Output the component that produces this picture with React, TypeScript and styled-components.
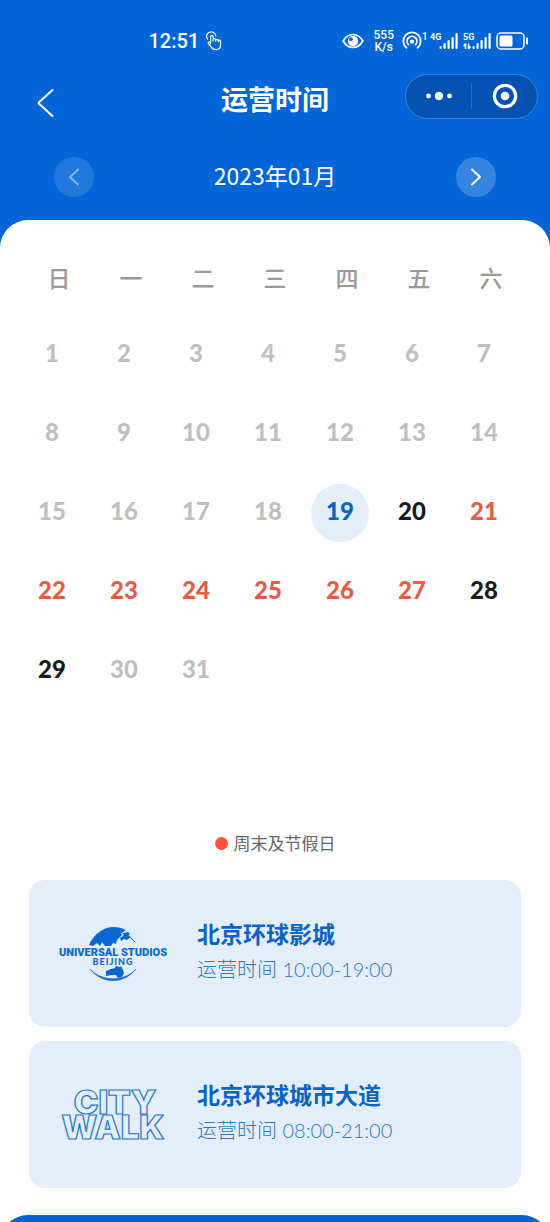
import React from "react";
import styled, { createGlobalStyle } from "styled-components";

const blue = "#0266d9";
const deepBlue = "#0963c2";
const paleBlue = "#e4eefb";
const red = "#e95a45";

const GlobalStyle = createGlobalStyle`
  * { box-sizing: border-box; }
  body {
    margin: 0;
    background: #fff;
    font-family: "Noto Sans CJK SC", "Noto Sans", sans-serif;
  }
  button { padding: 0; border: 0; background: none; font: inherit; color: inherit; cursor: pointer; }
  svg { flex: none; }
`;

const Page = styled.main`
  background: ${blue};
  color: #fff;
`;

const StatusBar = styled.div`
  display: flex;
  align-items: center;
  justify-content: space-between;
  height: 62px;
  padding: 20px 21px 0 27%;
`;

const StatusGroup = styled.div<{ $gap: number }>`
  display: flex;
  align-items: center;
  gap: ${(p) => p.$gap}px;
`;

const Clock = styled.time`
  font-family: Roboto, sans-serif;
  font-size: 20px;
  line-height: 24px;
  font-weight: 500;
`;

const Speed = styled.div`
  font-family: Roboto, sans-serif;
  font-size: 12px;
  line-height: 12px;
  font-weight: 500;
  text-align: center;
`;

const NavBar = styled.header`
  display: grid;
  grid-template-columns: 1fr auto 1fr;
  align-items: center;
  height: 68px;
  padding: 0 12px 0 36px;
`;

const BackButton = styled.button`
  justify-self: start;
  display: flex;
  padding-top: 14px;
`;

const Title = styled.h1`
  margin: 0;
  padding: 6px 24px 0 0;
  font-size: 27px;
  line-height: 32px;
  font-weight: 700;
`;

const Capsule = styled.div`
  justify-self: end;
  display: flex;
  align-items: center;
  width: 133px;
  height: 45px;
  border: 1px solid #3b82d6;
  border-radius: 23px;
  background: #0351b0;
`;

const CapsuleButton = styled.button`
  flex: 1;
  display: flex;
  align-items: center;
  justify-content: center;
  height: 26px;
  & + & { border-left: 1px solid #2a6fc4; }
`;

const MonthBar = styled.div`
  display: flex;
  align-items: center;
  justify-content: space-between;
  height: 90px;
  padding: 3px 54px 0;
`;

const MonthLabel = styled.h2`
  margin: 0;
  padding-bottom: 4px;
  font-size: 23px;
  line-height: 28px;
  font-weight: 400;
`;

const RoundButton = styled.button`
  display: flex;
  align-items: center;
  justify-content: center;
  width: 40px;
  height: 40px;
  border-radius: 50%;
  background: rgba(255, 255, 255, 0.2);
  &:disabled { background: rgba(255, 255, 255, 0.12); color: rgba(255, 255, 255, 0.45); }
`;

const Panel = styled.section`
  padding: 22px 29px 27px;
  border-radius: 28px 28px 0 0;
  background: #fff;
`;

const Calendar = styled.table`
  width: calc(100% + 12px);
  margin: 0 0 80px -13px;
  border-collapse: collapse;
  table-layout: fixed;
`;

const Weekday = styled.th`
  height: 73px;
  padding: 0 0 4px 14px;
  color: #999;
  font-size: 23px;
  line-height: 28px;
  font-weight: 500;
`;

const DayCell = styled.td`
  height: 79px;
  padding: 0;
`;

type DayKind = "closed" | "open" | "holiday" | "selected";

const dayColors: Record<DayKind, string> = {
  closed: "#bfbfbf",
  open: "#1a1a1a",
  holiday: red,
  selected: deepBlue,
};

const DayButton = styled.button<{ $kind: DayKind }>`
  display: block;
  width: 58px;
  height: 58px;
  margin: 0 auto;
  padding-bottom: 4px;
  border-radius: 50%;
  background: ${(p) => (p.$kind === "selected" ? paleBlue : "transparent")};
  color: ${(p) => dayColors[p.$kind]};
  font-family: Lato, sans-serif;
  font-size: 24px;
  font-weight: 900;
`;

const Legend = styled.p`
  display: flex;
  align-items: center;
  justify-content: center;
  gap: 6px;
  height: 90px;
  margin: 0;
  padding-top: 16px;
  color: #666;
  font-size: 17px;
  line-height: 20px;
`;

const Dot = styled.span`
  width: 13px;
  height: 13px;
  border-radius: 50%;
  background: #f8553d;
`;

const VenueList = styled.div`
  display: flex;
  flex-direction: column;
  gap: 14px;
`;

const VenueCard = styled.article`
  display: grid;
  grid-template-columns: 168px 1fr;
  height: 147px;
  border-radius: 16px;
  background: ${paleBlue};
  color: ${deepBlue};
`;

const VenueLogo = styled.div`
  display: flex;
  align-items: center;
  justify-content: center;
`;

const VenueInfo = styled.div`
  padding-top: 36px;
`;

const VenueName = styled.h3`
  margin: 0;
  font-size: 23px;
  line-height: 34px;
  font-weight: 700;
`;

const VenueHours = styled.p`
  margin: 0;
  color: #2d79b9;
  font-family: Lato, "Noto Sans CJK SC", sans-serif;
  font-size: 20px;
  line-height: 38px;
  font-weight: 300;
`;

const Footer = styled.footer`
  height: 8px;
  overflow: hidden;
  background: #fff;
`;

const FooterSheet = styled.div`
  height: 56px;
  border-radius: 28px;
  background: ${blue};
`;

const TouchIcon = () => (
  <svg width="18" height="20" viewBox="0 0 18 20" fill="none" stroke="#fff" strokeWidth="1.2" strokeLinecap="round" strokeLinejoin="round">
    <path d="M2.5 8.2A4.6 4.6 0 1 1 10.8 5" />
    <path d="M5.6 13V5.6a1.3 1.3 0 0 1 2.6 0V10V8.8a1.2 1.2 0 0 1 2.5 0v1.4v-.7a1.2 1.2 0 0 1 2.5 0v1.3v-.5a1.1 1.1 0 0 1 2.3 0V14c0 2.6-1.6 4.6-4.4 4.6-2.4 0-3.7-.8-4.7-2.3L3.3 12.6c-.7-1.3.8-2.2 1.7-1.2z" />
  </svg>
);

const EyeIcon = () => (
  <svg width="22" height="16" viewBox="0 0 22 16">
    <path d="M1.2 8C3.5 3.800 7 1.500 11 1.500S18.500 3.800 20.800 8C18.500 12.200 15 14.500 11 14.500S3.500 12.200 1.200 8Z" fill="none" stroke="#fff" strokeWidth="1.7" />
    <circle cx="11" cy="8" r="5.2" fill="#fff" />
    <circle cx="9" cy="6.2" r="1.9" fill={blue} />
  </svg>
);

const HotspotIcon = () => (
  <svg width="26" height="20" viewBox="0 0 26 20" fill="none" stroke="#fff" strokeWidth="1.8" strokeLinecap="round">
    <path d="M4.5 16.8A8.7 8.7 0 1 1 15.5 16.800" />
    <path d="M6.4 13.6A4.900 4.900 0 1 1 13.600 13.600" />
    <circle cx="10" cy="10.6" r="2.2" fill="#fff" stroke="none" />
    <text x="20" y="9" fill="#fff" stroke="none" fontSize="10" fontFamily="Roboto, sans-serif" fontWeight="500">1</text>
  </svg>
);

const SignalIcon = ({ label, data }: { label: string; data?: boolean }) => (
  <svg width="28" height="20" viewBox="0 0 28 20" fill="#fff">
    <text x="0" y="9" fontSize="9" fontFamily="Roboto, sans-serif" fontWeight="700">{label}</text>
    <rect x="9.5" y="15" width="2.2" height="3" rx="1" />
    <rect x="13.5" y="12" width="2.2" height="6" rx="1" />
    <rect x="17.5" y="9" width="2.2" height="9" rx="1" />
    <rect x="21.5" y="6" width="2.2" height="12" rx="1" />
    <rect x="25.5" y="2" width="2.2" height="16" rx="1" />
    {data && <path d="M2.5 12.5V18M2.5 12.500L.5 15M5.500 12.500V18M5.500 18L7.500 15.500" fill="none" stroke="#fff" strokeWidth="1.5" />}
  </svg>
);

const BatteryIcon = () => (
  <svg width="33" height="18" viewBox="0 0 33 18">
    <rect x="1" y="1" width="27" height="16" rx="4" fill="none" stroke="#fff" strokeWidth="1.5" />
    <rect x="3.5" y="3.5" width="13" height="11" rx="1.5" fill="#fff" />
    <rect x="30" y="5.5" width="2" height="7" rx="1" fill="#fff" />
  </svg>
);

const Chevron = ({ flip }: { flip?: boolean }) => (
  <svg width="12" height="18" viewBox="0 0 12 18" fill="none" stroke="currentColor" strokeWidth="2" strokeLinecap="round" strokeLinejoin="round">
    <path d={flip ? "M2 1.5L10 9L2 16.5" : "M10 1.5L2 9L10 16.5"} />
  </svg>
);

const UniversalLogo = () => (
  <svg width="120" height="56" viewBox="0 0 120 56" role="img" aria-label="Universal Studios Beijing" fill="#0868d0">
    <path d="M37 17A28 28 0 0 1 82 16" fill="none" stroke="#0868d0" strokeWidth="1" />
    <path d="M37 17C42 7 52 1 60 1C65 1 69 2 73 4L70 6L67 6L69 9L66 12L64 14L63 18L60 17L58 20L52 20L49 16L47 20L44 17L40 20L36 19Z" />
    <path d="M71 7l4-1 2 2-2 2 3 1-4 3-3-1-3 2-1-3 3-2z" />
    <path d="M37 43C49 58.500 71 58.500 83 43C71 56 49 56 37 43Z" stroke="#0868d0" strokeWidth=".5" />
    <path d="M53 45l5-2 4-1 1-2 4 1 1-1 2 4 1 3-2 4-4 1-2-3-4 0-6 1z" />
    <text x="60" y="30" textAnchor="middle" fontFamily="Roboto, sans-serif" fontWeight="900" fontSize="11" stroke={paleBlue} strokeWidth="3" paintOrder="stroke">UNIVERSAL STUDIOS</text>
    <text x="60" y="39" textAnchor="middle" fontFamily="Lato, sans-serif" fontWeight="900" fontSize="9" letterSpacing="1">BEIJING</text>
  </svg>
);

const CityWalkLogo = () => (
  <svg width="120" height="76" viewBox="0 0 120 76" role="img" aria-label="City Walk" fill={paleBlue} stroke="#1c74c8" strokeWidth="1.2" fontFamily="Inter, sans-serif" fontWeight="900" textAnchor="middle">
    <text x="62" y="37" fontSize="33">CITY</text>
    <text x="60" y="62" fontSize="33">WALK</text>
  </svg>
);

const weekdays = ["日", "一", "二", "三", "四", "五", "六"];
const weeks = [0, 1, 2, 3, 4].map((w) => weekdays.map((_, d) => w * 7 + d + 1));

const kindOf = (day: number): DayKind => {
  if (day === 19) return "selected";
  if (day >= 21 && day <= 27) return "holiday";
  if (day === 20 || day === 28 || day === 29) return "open";
  return "closed";
};

const venues = [
  { name: "北京环球影城", hours: "10:00-19:00", logo: <UniversalLogo /> },
  { name: "北京环球城市大道", hours: "08:00-21:00", logo: <CityWalkLogo /> },
];

export default function App() {
  return (
    <>
      <GlobalStyle />
      <Page>
        <StatusBar>
          <StatusGroup $gap={6}>
            <Clock>12:51</Clock>
            <TouchIcon />
          </StatusGroup>
          <StatusGroup $gap={10}>
            <EyeIcon />
            <StatusGroup $gap={8}>
              <Speed>555<br />K/s</Speed>
              <StatusGroup $gap={5}>
                <StatusGroup $gap={2}>
                  <HotspotIcon />
                  <SignalIcon label="4G" />
                </StatusGroup>
                <SignalIcon label="5G" data />
                <BatteryIcon />
              </StatusGroup>
            </StatusGroup>
          </StatusGroup>
        </StatusBar>
        <NavBar>
          <BackButton aria-label="返回">
            <svg width="20" height="30" viewBox="0 0 20 30" fill="none" stroke="#fff" strokeWidth="2" strokeLinecap="round" strokeLinejoin="round">
              <path d="M16.5 2L3 14.2Q2.2 15 3 15.8L16.5 28" />
            </svg>
          </BackButton>
          <Title>运营时间</Title>
          <Capsule>
            <CapsuleButton aria-label="更多">
              <svg width="28" height="10" viewBox="0 0 28 10" fill="#fff">
                <circle cx="3.5" cy="5" r="2.4" />
                <circle cx="14" cy="5" r="4.2" />
                <circle cx="24.5" cy="5" r="2.4" />
              </svg>
            </CapsuleButton>
            <CapsuleButton aria-label="关闭">
              <svg width="26" height="26" viewBox="0 0 26 26">
                <circle cx="13" cy="13" r="10.7" fill="none" stroke="#fff" strokeWidth="3.2" />
                <circle cx="13" cy="13" r="4.3" fill="#fff" />
              </svg>
            </CapsuleButton>
          </Capsule>
        </NavBar>
        <MonthBar>
          <RoundButton aria-label="上个月" disabled><Chevron /></RoundButton>
          <MonthLabel>2023年01月</MonthLabel>
          <RoundButton aria-label="下个月"><Chevron flip /></RoundButton>
        </MonthBar>
        <Panel>
          <Calendar>
            <thead>
              <tr>{weekdays.map((d) => <Weekday key={d} scope="col">{d}</Weekday>)}</tr>
            </thead>
            <tbody>
              {weeks.map((week) => (
                <tr key={week[0]}>
                  {week.map((day) => (
                    <DayCell key={day}>
                      {day <= 31 && <DayButton $kind={kindOf(day)}>{day}</DayButton>}
                    </DayCell>
                  ))}
                </tr>
              ))}
            </tbody>
          </Calendar>
          <Legend><Dot />周末及节假日</Legend>
          <VenueList>
            {venues.map((v) => (
              <VenueCard key={v.name}>
                <VenueLogo>{v.logo}</VenueLogo>
                <VenueInfo>
                  <VenueName>{v.name}</VenueName>
                  <VenueHours>运营时间 {v.hours}</VenueHours>
                </VenueInfo>
              </VenueCard>
            ))}
          </VenueList>
        </Panel>
        <Footer><FooterSheet /></Footer>
      </Page>
    </>
  );
}
